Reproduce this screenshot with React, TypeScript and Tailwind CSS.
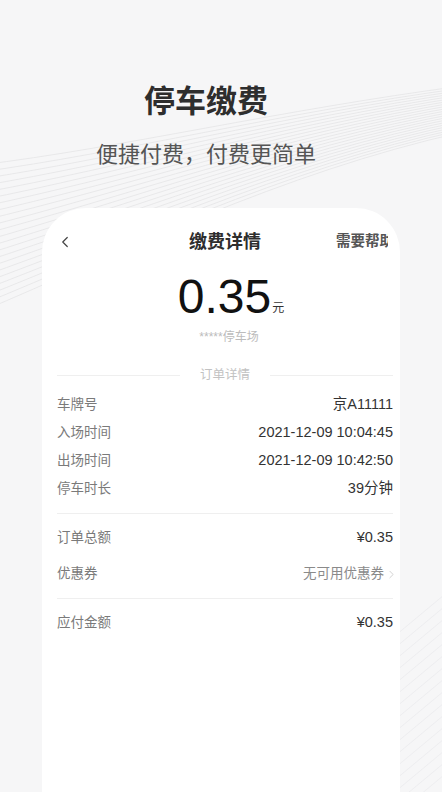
import { ChevronLeft, ChevronRight } from "lucide-react";

// ─── Background waves ─────────────────────────────────────────────────────────

function WaveLines() {
  const top = Array.from({ length: 22 }, (_, i) => i);
  const bottom = Array.from({ length: 16 }, (_, i) => i);
  return (
    <svg
      className="absolute inset-0 h-full w-full"
      viewBox="0 0 442 792"
      fill="none"
      preserveAspectRatio="none"
    >
      {top.map((i) => (
        <path
          key={`t${i}`}
          d={`M -20 ${165 + i * 7} C 120 ${148 + i * 5}, 280 ${110 + i * 3}, 462 ${86 + i * 2.2}`}
          stroke="#e2e2e4"
          strokeWidth="0.7"
        />
      ))}
      {bottom.map((i) => (
        <path
          key={`b${i}`}
          d={`M 390 ${640 + i * 12} L 462 ${580 + i * 12}`}
          stroke="#ebebed"
          strokeWidth="0.8"
        />
      ))}
    </svg>
  );
}

// ─── Rows ─────────────────────────────────────────────────────────────────────

function InfoRow({
  label,
  value,
  tall,
  arrow,
}: {
  label: string;
  value: string;
  tall?: boolean;
  arrow?: boolean;
}) {
  return (
    <div className={`flex items-center justify-between ${tall ? "h-[36px]" : "h-[28px]"}`}>
      <span className="text-[13.5px] text-[#7a7a7a]">{label}</span>
      <span
        className={`flex items-center ${arrow ? "text-[13.5px] text-[#8a8a8a]" : "text-[14.5px] text-[#333]"}`}
      >
        {value}
        {arrow && (
          <ChevronRight className="ml-[1px] h-[13px] w-[13px] text-[#c8c8c8]" strokeWidth={1.5} />
        )}
      </span>
    </div>
  );
}

export default function App() {
  return (
    <div className="relative flex h-[792px] w-[442px] flex-col overflow-hidden bg-[#f6f6f7] font-['Liberation_Sans','Noto_Sans_CJK_SC',sans-serif]">
      <WaveLines />

      <div className="relative flex flex-col items-center pr-[30px]">
        <h1 className="mt-[86px] h-[32px] text-[31px] font-bold leading-[32px] text-[#2e2e2e]">
          停车缴费
        </h1>
        <p className="mt-[22px] h-[30px] whitespace-nowrap text-[22px] leading-[30px] text-[#555]">
          便捷付费，付费更简单
        </p>
      </div>

      {/* ─── Card ─── */}
      <div className="relative ml-[42px] mt-[38px] flex w-[358px] flex-1 flex-col rounded-t-[44px] bg-white pl-[15px] pr-[7px] pt-[12px]">
        <div className="relative flex h-[44px] items-center justify-center">
          <ChevronLeft className="absolute left-[-1px] h-[18px] w-[18px] text-[#444]" strokeWidth={1.6} />
          <span className="text-[18px] font-bold text-[#2e2e2e]">缴费详情</span>
          <div className="absolute left-[279px] w-[52px] overflow-hidden whitespace-nowrap text-[14.5px] font-semibold text-[#555]">
            需要帮助
          </div>
        </div>

        <div className="mt-[7px] flex h-[52px] items-end justify-center pl-[12px]">
          <span className="text-[48px] leading-[52px] text-[#111]">0.35</span>
          <span className="mb-[8px] ml-[1px] text-[12px] leading-[14px] text-[#333]">元</span>
        </div>
        <div className="mt-[5px] h-[18px] pl-[8px] text-center text-[12px] leading-[18px] text-[#bcbcbc]">
          *****停车场
        </div>

        <div className="mt-[20px] flex h-[18px] items-center gap-[20px]">
          <div className="h-px flex-1 bg-[#efefef]" />
          <span className="text-[12.5px] text-[#c2c2c2]">订单详情</span>
          <div className="h-px flex-1 bg-[#efefef]" />
        </div>

        <div className="mt-[7px] flex flex-col">
          <InfoRow label="车牌号" value="京A11111" />
          <InfoRow label="入场时间" value="2021-12-09 10:04:45" />
          <InfoRow label="出场时间" value="2021-12-09 10:42:50" />
          <InfoRow label="停车时长" value="39分钟" />
        </div>

        <div className="mt-[10px] h-px bg-[#efefef]" />
        <div className="mt-[6px] flex flex-col">
          <InfoRow label="订单总额" value="¥0.35" tall />
          <div className="mr-[-5px]">
            <InfoRow label="优惠券" value="无可用优惠券" tall arrow />
          </div>
        </div>

        <div className="mt-[6px] h-px bg-[#efefef]" />
        <div className="mt-[6px]">
          <InfoRow label="应付金额" value="¥0.35" tall />
        </div>
      </div>
    </div>
  );
}
